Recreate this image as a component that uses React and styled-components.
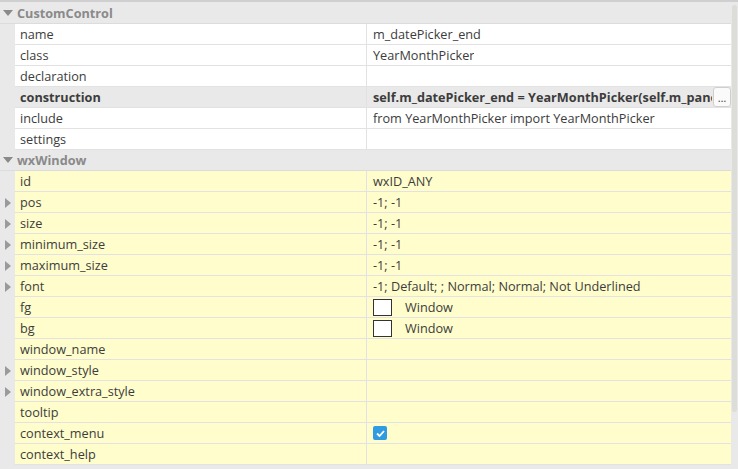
import React from "react";
import styled, { createGlobalStyle } from "styled-components";

const Global = createGlobalStyle`
  body { margin: 0; background: #e9e9e9; font-family: "Open Sans", "Noto Sans", sans-serif; }
`;

const Frame = styled.div`
  width: 738px; height: 469px; overflow: hidden; position: relative;
  background: #e9e9e9; border-top: 2px solid #cfcfcf; box-sizing: border-box;
`;
const Grid = styled.div`
  width: 731px; padding-top: 1px;
`;
const Row = styled.div`
  display: grid; grid-template-columns: 15px 352px 1fr;
  height: 21px; box-sizing: border-box;
  font-size: 12.7px; color: #3c3c3c;
`;
const Gutter = styled.div`
  display: flex; align-items: center; justify-content: center;
  background: #e9e9e9;
`;
const Cell = styled.div`
  display: flex; align-items: center; padding-left: ${p => p.$pad}px;
  padding-right: ${p => (p.$bold ? 19 : 0)}px;
  background: ${p => p.$bg}; border-bottom: 1px solid #e2e2e2;
  border-right: ${p => (p.$right ? "1px solid #e2e2e2" : "none")};
  font-weight: ${p => (p.$bold ? 700 : 400)};
  white-space: nowrap; overflow: hidden; position: relative; gap: 13px;
`;
const ValueText = styled.span`
  overflow: hidden; white-space: nowrap;
`;
const Header = styled.div`
  display: flex; align-items: center; height: 21px; background: #e9e9e9;
  font-size: 12.7px; font-weight: 700; color: #8a8a8a; gap: 4px; padding-left: 3px;
  border-bottom: 1px solid #dcdcdc; box-sizing: border-box;
`;
const Swatch = styled.span`
  width: 19px; height: 17px; border: 1px solid #333; background: #fff; box-sizing: border-box; flex: none;
`;
const Check = styled.span`
  width: 14px; height: 14px; border-radius: 2px; background: #2f9be2;
  display: flex; align-items: center; justify-content: center;
`;
const Dots = styled.span`
  position: absolute; right: 0; top: 0; bottom: 0; width: 18px;
  background: #fafafa; border: 1px solid #cfcfcf; border-radius: 3px;
  font-weight: 400; font-size: 11px; display: flex; align-items: center; justify-content: center;
  box-sizing: border-box;
`;
const Scroll = styled.div`
  position: absolute; right: 1px; top: 3px; width: 5px; height: 407px;
  background: #dcdcd8; border-radius: 3px;
`;

const Down = () => (
  <svg width="10" height="6" viewBox="0 0 10 6"><path d="M0 0h10L5 6z" fill="#8a8a8a" /></svg>
);
const Right = () => (
  <svg width="6" height="10" viewBox="0 0 6 10"><path d="M0 0l6 5-6 5z" fill="#9a9a9a" /></svg>
);

const custom = [
  ["name", "m_datePicker_end"],
  ["class", "YearMonthPicker"],
  ["declaration", ""],
  ["construction", "self.m_datePicker_end = YearMonthPicker(self.m_panel1, wxID_ANY)", "bold"],
  ["include", "from YearMonthPicker import YearMonthPicker"],
  ["settings", ""],
];
const win = [
  ["id", "wxID_ANY"],
  ["pos", "-1; -1", 1],
  ["size", "-1; -1", 1],
  ["minimum_size", "-1; -1", 1],
  ["maximum_size", "-1; -1", 1],
  ["font", "-1; Default; ; Normal; Normal; Not Underlined", 1],
  ["fg", "swatch"],
  ["bg", "swatch"],
  ["window_name", ""],
  ["window_style", "", 1],
  ["window_extra_style", "", 1],
  ["tooltip", ""],
  ["context_menu", "check"],
  ["context_help", ""],
];

function Value({ v }) {
  if (v === "swatch") return (<><Swatch />Window</>);
  if (v === "check") return (
    <Check><svg width="9" height="7" viewBox="0 0 9 7"><path d="M1 3.5l2.5 2.5L8 1" stroke="#fff" strokeWidth="1.8" fill="none" /></svg></Check>
  );
  return v;
}

export default function App() {
  return (
    <Frame>
      <Global />
      <Grid>
        <Header><Down />CustomControl</Header>
        {custom.map(([k, v, b]) => {
          const bg = b ? "#e9e9e9" : "#fff";
          return (
            <Row key={k}>
              <Gutter />
              <Cell $bg={bg} $pad={5} $right $bold={!!b}>{k}</Cell>
              <Cell $bg={bg} $pad={6} $bold={!!b}><ValueText>{v}</ValueText>{b && <Dots>…</Dots>}</Cell>
            </Row>
          );
        })}
        <Header><Down />wxWindow</Header>
        {win.map(([k, v, e]) => (
          <Row key={k}>
            <Gutter>{e && <Right />}</Gutter>
            <Cell $bg="#fffdcc" $pad={5} $right>{k}</Cell>
            <Cell $bg="#fffdcc" $pad={6}><Value v={v} /></Cell>
          </Row>
        ))}
      </Grid>
      <Scroll />
    </Frame>
  );
}
